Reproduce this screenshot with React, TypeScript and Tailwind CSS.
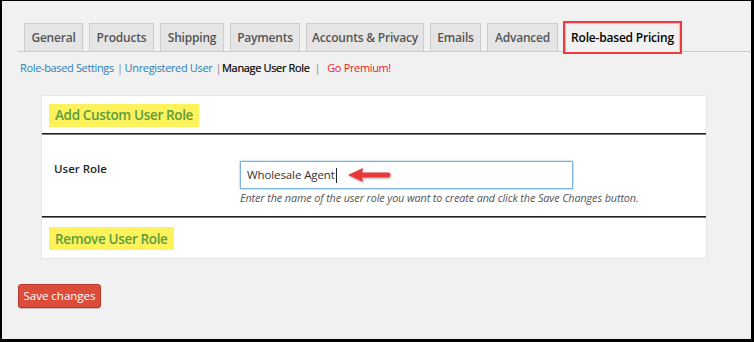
import React from "react";

const tabs = [
  { label: "General", w: 59 },
  { label: "Products", w: 65 },
  { label: "Shipping", w: 64 },
  { label: "Payments", w: 70 },
  { label: "Accounts & Privacy", w: 118 },
  { label: "Emails", w: 51 },
  { label: "Advanced", w: 71 },
];

function Arrow() {
  return (
    <svg width="48" height="18" viewBox="0 0 48 18" className="absolute left-[106px] top-[4px]">
      <defs>
        <filter id="sh" x="-20%" y="-40%" width="140%" height="180%">
          <feDropShadow dx="0.5" dy="1" stdDeviation="0.8" floodColor="#000" floodOpacity="0.35" />
        </filter>
      </defs>
      <path d="M1 9 L16 2 L15 6.5 L42 6.5 Q45 9 42 11.5 L15 11.5 L16 16 Z" fill="#e8383b" filter="url(#sh)" />
    </svg>
  );
}

export default function App() {
  return (
    <div
      className="w-[754px] h-[342px] bg-[#f1f1f1] border-black border-t-[1px] border-l-[2px] border-r-[3px] border-b-[3px] overflow-hidden"
      style={{ fontFamily: '"Open Sans", "Noto Sans", Arial, sans-serif' }}
    >
      <div className="pl-[16px]">
        {/* tabs */}
        <div className="flex items-end pt-[21px] border-b border-[#cccccc] h-[51px]">
          {tabs.map((t) => (
            <div
              key={t.label}
              style={{ width: t.w }}
              className="ml-[6px] h-[29px] -mb-px flex items-center justify-center bg-[#e5e5e5] border border-[#cccccc] text-[12px] font-semibold text-[#555555] tracking-[-0.2px]"
            >
              {t.label}
            </div>
          ))}
          <div className="ml-[7px] w-[115px] h-[29px] -mb-px flex items-center justify-center bg-[#f1f1f1] border border-[#cccccc] border-b-[#f1f1f1] text-[12px] font-semibold text-[#000000] tracking-[-0.2px] outline-2 outline-[#ee3a3e] shadow-[0_0_3px_rgba(0,0,0,0.25)]">
            Role-based Pricing
          </div>
        </div>
        {/* sub links */}
        <div className="flex items-center h-[32px] pl-[2px] text-[11px] tracking-[-0.35px]">
          <span className="text-[#2e7fb6]">Role-based Settings</span>
          <span className="text-[#888] ml-[3px] mr-[2px]">|</span>
          <span className="text-[#2e7fb6]">Unregistered User</span>
          <span className="text-[#888] ml-[3px] mr-[1px]">|</span>
          <span className="text-[#000] [-webkit-text-stroke:0.2px_#000]">Manage User Role</span>
          <span className="text-[#888] ml-[5px] mr-[7px]">|</span>
          <span className="text-[#f01a2a]">Go Premium!</span>
        </div>
        {/* panel */}
        <div className="ml-[23px] mt-[11px] w-[666px] bg-white border border-[#e5e5e5]">
          <div className="h-[37px] flex items-start pt-[8px] pl-[7px]">
            <span className="bg-[#fdf25a] px-[6px] h-[23px] flex items-center text-[13.5px] font-semibold text-[#5a9e41] tracking-[-0.35px]">
              Add Custom User Role
            </span>
          </div>
          <div className="h-[2px] bg-[#1e1e1e] border-b border-[#777]" />
          <div className="flex pt-[26px] pb-[10px]">
            <div className="w-[198px] pl-[12px] leading-[16px] text-[11.5px] font-semibold text-[#23282d]">User Role</div>
            <div>
              <div className="relative w-[333px] h-[28px] border border-[#7fb1de] shadow-[0_0_2px_rgba(30,140,190,0.6)] flex items-center pl-[6px] text-[11.5px] text-[#333] tracking-[-0.1px]">
                <span>Wholesale Agent</span>
                <span className="ml-[1px] w-px h-[15px] bg-[#222]" />
                <Arrow />
              </div>
              <div className="mt-[1px] text-[10.8px] italic text-[#555] tracking-[-0.1px]">
                Enter the name of the user role you want to create and click the Save Changes button.
              </div>
            </div>
          </div>
          <div className="h-[2px] bg-[#1e1e1e] border-b border-[#777]" />
          <div className="h-[40px] flex items-start pt-[9px] pl-[7px]">
            <span className="bg-[#fdf25a] px-[6px] h-[23px] flex items-center text-[13.5px] font-semibold text-[#5a9e41] tracking-[-0.35px]">
              Remove User Role
            </span>
          </div>
        </div>
        {/* save */}
        <div className="mt-[23px]">
          <button className="w-[83px] h-[24px] bg-[#dd4b39] border border-[#b83a2c] rounded-[3px] text-white text-[11.5px] shadow-[0_1px_0_rgba(0,0,0,0.2)]">
            Save changes
          </button>
        </div>
      </div>
    </div>
  );
}
